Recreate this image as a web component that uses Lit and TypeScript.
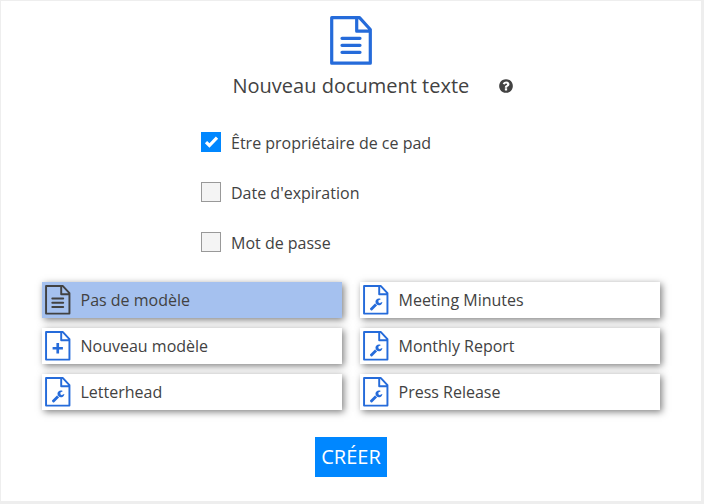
import { LitElement, html, css, svg } from "lit";
import { customElement, property, state } from "lit/decorators.js";
import { classMap } from "lit/directives/class-map.js";

type Glyph = "text" | "plus" | "wrench";

const glyphs = {
  text: svg`<path class="line" d="M12 22.3H30M12 29.3H30M12 36.3H30" />`,
  plus: svg`<path class="bold" d="M12.5 28.5H29.5M21 20V37" />`,
  wrench: svg`<path class="fill" transform="translate(10 20.5) scale(.01265)"
    d="M1060 1010L410 1660q-37 37-90 37-52 0-91-37l-76-78q-38-36-38-90 0-53 38-91L800 752q39 98 100 160t160 98zM1726 617q0 39-23 106-47 134-164.500 217.500t-258.500 83.500q-185 0-316.500-131.500t-131.500-316.500 131.500-316.500 316.500-131.500q58 0 121.500 16.500t107.500 46.500q16 11 16 28t-16 28l-293 169v224l193 107q5-3 79-48.500t135.500-81 70.500-35.500q15 0 23.500 10t8.500 25z" />`,
};

@customElement("file-icon")
export class FileIcon extends LitElement {
  @property() glyph: Glyph = "text";

  static styles = css`
    :host { display: block; }
    svg { display: block; width: 100%; height: 100%; }
    path { fill: none; stroke: currentColor; stroke-width: 3.2; stroke-linejoin: round; }
    .line { stroke-linecap: round; }
    .bold { stroke-width: 4.4; }
    .fill { fill: currentColor; stroke: none; }
  `;

  render() {
    return html`<svg viewBox="0 0 42 49">
      <path d="M1.700 1.700H29.500L40.300 13.500V47.200H1.700ZM26.700 1.700V15.200H40.300" />
      ${glyphs[this.glyph]}
    </svg>`;
  }
}

@customElement("app-root")
export class AppRoot extends LitElement {
  @state() private selected = 0;
  @state() private options = [
    { label: "Être propriétaire de ce pad", on: true },
    { label: "Date d'expiration", on: false },
    { label: "Mot de passe", on: false },
  ];

  private templates: { name: string; glyph: Glyph }[] = [
    { name: "Pas de modèle", glyph: "text" },
    { name: "Meeting Minutes", glyph: "wrench" },
    { name: "Nouveau modèle", glyph: "plus" },
    { name: "Monthly Report", glyph: "wrench" },
    { name: "Letterhead", glyph: "wrench" },
    { name: "Press Release", glyph: "wrench" },
  ];

  static styles = css`
    :host {
      display: block;
      box-sizing: border-box;
      height: 504px;
      padding: 1px 3px 3px 1px;
      background: #eee;
      color: #424242;
      font: 16px/24px "Open Sans", sans-serif;
    }
    .dialog {
      box-sizing: border-box;
      height: 500px;
      padding: 15px 41px 0;
      background: #fff;
      display: flex;
      flex-direction: column;
      align-items: center;
    }
    .hero { width: 42px; height: 49px; color: #256bda; }
    .title {
      display: flex;
      align-items: center;
      align-self: stretch;
      height: 30px;
      margin-top: 6px;
      padding-left: 190.500px;
      font-size: 20px;
      white-space: nowrap;
    }
    .help { width: 16px; height: 16px; margin-left: 29px; fill: currentColor; }
    .options {
      display: flex;
      flex-direction: column;
      gap: 26px;
      width: 300px;
      margin-top: 30px;
    }
    .option { display: flex; height: 24px; cursor: pointer; }
    .box {
      box-sizing: border-box;
      width: 20px;
      height: 20px;
      margin: 1px 10px 0 0;
      border: 1px solid #999;
      background: #f4f4f4;
    }
    .box.on { border-color: #0087ff; background: #0087ff; }
    .box svg { display: block; width: 18px; height: 18px; fill: none; stroke: #fff; stroke-width: 3.200; }
    .templates {
      display: grid;
      grid-template-columns: 300px 300px;
      grid-auto-rows: 36px;
      gap: 10px 18px;
      margin-top: 27px;
      align-self: flex-start;
    }
    .template {
      display: flex;
      align-items: center;
      box-sizing: border-box;
      padding-left: 3px;
      background: #fff;
      box-shadow: 2px 2px 7px rgba(0, 0, 0, 0.5);
      cursor: pointer;
    }
    .template file-icon { width: 25.500px; height: 29.700px; margin-right: 10px; color: #256bda; }
    .template.selected { background: #a5c1ef; }
    .template.selected file-icon { color: #424242; }
    .create {
      width: 72px;
      height: 40px;
      margin-top: 27px;
      padding: 0;
      border: 0;
      background: #0087ff;
      color: #fff;
      font: 20px/40px "Open Sans", sans-serif;
    }
  `;

  private toggle(i: number) {
    this.options = this.options.map((o, n) => (n === i ? { ...o, on: !o.on } : o));
  }

  render() {
    return html`<div class="dialog">
      <file-icon class="hero"></file-icon>
      <div class="title">
        <span>Nouveau document texte</span>
        <svg class="help" viewBox="0 0 1792 1792"><path d="M1024 1376v-192q0-14-9-23t-23-9h-192q-14 0-23 9t-9 23v192q0 14 9 23t23 9h192q14 0 23-9t9-23zm256-672q0-88-55.500-163t-138.500-116-170-41q-243 0-371 213-15 24 8 42l132 100q7 6 19 6 16 0 25-12 53-68 86-92 34-24 86-24 48 0 85.500 26t37.500 59q0 38-20 61t-68 45q-63 28-115.500 86.500t-52.500 125.500v36q0 14 9 23t23 9h192q14 0 23-9t9-23q0-19 21.500-49.500t54.500-49.500q32-18 49-28.500t46-35 44.500-48 28-60.500 12.500-81zm384 192q0 209-103 385.500t-279.500 279.500-385.500 103-385.500-103-279.500-279.500-103-385.500 103-385.500 279.500-279.500 385.500-103 385.500 103 279.500 279.500 103 385.500z" /></svg>
      </div>
      <div class="options">
        ${this.options.map(
          (o, i) => html`<div class="option" @click=${() => this.toggle(i)}>
            <span class=${classMap({ box: true, on: o.on })}>
              ${o.on ? html`<svg viewBox="0 0 18 18"><path d="M4 9.200L7.400 12.500L15 4.600" /></svg>` : ""}
            </span>
            <span>${o.label}</span>
          </div>`
        )}
      </div>
      <div class="templates">
        ${this.templates.map(
          (t, i) => html`<div
            class=${classMap({ template: true, selected: i === this.selected })}
            @click=${() => (this.selected = i)}
          >
            <file-icon .glyph=${t.glyph}></file-icon>
            <span>${t.name}</span>
          </div>`
        )}
      </div>
      <button class="create">CRÉER</button>
    </div>`;
  }
}
